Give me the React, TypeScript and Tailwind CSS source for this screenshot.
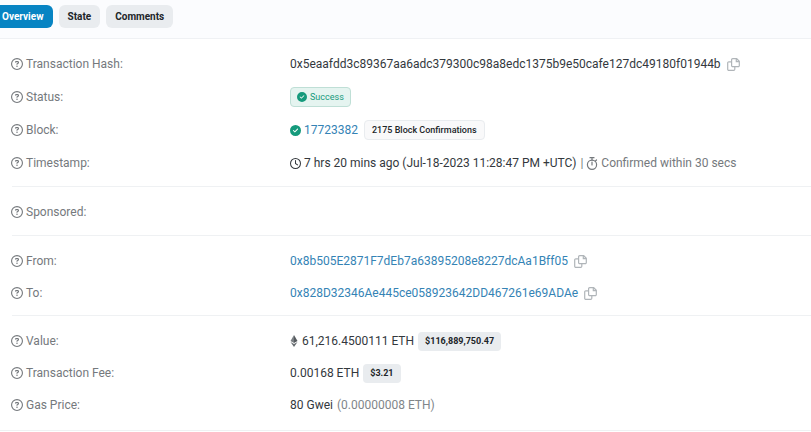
import { FaCircleCheck, FaRegCircleQuestion, FaRegClock } from 'react-icons/fa6';

const tabs = ['Overview', 'State', 'Comments'];

const CopyButton: React.FC<{ label: string }> = ({ label }) => (
  <button type="button" aria-label={label} className="ml-1.5 shrink-0 text-[#b0b5b9]">
    <svg viewBox="0 0 13 13" className="size-[13px]" fill="none" stroke="currentColor" strokeWidth="1.2">
      <path d="M5.7 .7h4l2.6 2.5v4.3a1.1 1.1 0 0 1-1.1 1.1H5.7a1.1 1.1 0 0 1-1.1-1.1V1.8A1.1 1.1 0 0 1 5.7.7z" />
      <path d="M9.3 1v2.6h2.8" />
      <path d="M4.5 3.8H1.8A1.1 1.1 0 0 0 .7 4.9v6.3a1.1 1.1 0 0 0 1.1 1.1h4.9a1.1 1.1 0 0 0 1.1-1.1V8.7" />
    </svg>
  </button>
);

const StopwatchIcon: React.FC = () => (
  <svg viewBox="0 0 12 13" className="h-[13px] w-3" fill="none" stroke="currentColor" strokeWidth="1.2" aria-hidden="true">
    <circle cx="6" cy="7.7" r="4.6" />
    <path d="M4 .7h4M6 .7v2.4M6 5v3M9.3 4.2l1.2-1.2" strokeLinecap="round" />
  </svg>
);

const EtherIcon: React.FC = () => (
  <svg viewBox="0 0 8 12" className="mr-1 h-3 w-2" fill="currentColor" aria-hidden="true">
    <path d="M4 0 .5 6 4 8.1z" fill="#7b8084" />
    <path d="M4 0l3.5 6L4 8.1z" fill="#565b5f" />
    <path d="M.5 6.9 4 9l3.5-2.1L4 12z" fill="#686d71" />
  </svg>
);

const Amount: React.FC<{ children: React.ReactNode }> = ({ children }) => (
  <span className="ml-1 rounded bg-[#e9ecef] px-[7px] text-[9px] leading-[19px] font-bold text-[#212529]">
    {children}
  </span>
);

const Group: React.FC<{ children: React.ReactNode; className?: string }> = ({
  children,
  className = 'pb-[7px]',
}) => <dl className={`ml-3 border-b border-[#eff1f3] pt-[9px] ${className}`}>{children}</dl>;

const Row: React.FC<{ label: string; children?: React.ReactNode }> = ({ label, children }) => (
  <div className="-ml-px grid min-h-8 grid-cols-[279px_1fr] items-center">
    <dt className="flex items-center gap-[3px] text-[#75797d]">
      <FaRegCircleQuestion className="size-3 shrink-0" aria-hidden="true" />
      {label}
    </dt>
    <dd className="flex items-center whitespace-nowrap">{children}</dd>
  </div>
);

export default function App() {
  return (
    <div className="overflow-hidden bg-white font-[Roboto,sans-serif] text-[12px] leading-4 text-[#33383d]">
      <nav
        className="flex gap-1.5 border-b border-[#eff1f4] bg-[#fbfcfe] pt-[5px] pb-[10px]"
        aria-label="Transaction sections"
      >
        {tabs.map((tab, i) => (
          <button
            key={tab}
            type="button"
            className={
              i === 0
                ? '-ml-[7px] rounded-md bg-[#0784c3] px-[9px] py-[3px] text-[10px] leading-[17px] font-bold text-white'
                : 'rounded-md bg-[#e9ecef] px-[9px] py-[3px] text-[10px] leading-[17px] font-bold text-[#212529]'
            }
          >
            {tab}
          </button>
        ))}
      </nav>

      <main>
        <Group className="flex flex-col gap-px pb-[7px]">
          <Row label="Transaction Hash:">
            0x5eaafdd3c89367aa6adc379300c98a8edc1375b9e50cafe127dc49180f01944b
            <CopyButton label="Copy transaction hash" />
          </Row>
          <Row label="Status:">
            <span className="flex items-center gap-[3px] rounded border border-[#bfdfd6] bg-[#e5f4f0] px-1.5 text-[9px] leading-[18px] text-[#159a7c]">
              <FaCircleCheck className="size-[10px]" aria-hidden="true" />
              Success
            </span>
          </Row>
          <Row label="Block:">
            <FaCircleCheck className="mr-[3px] size-[11px] text-[#159a7c]" aria-hidden="true" />
            <a href="#block" className="text-[#3483b5]">
              17723382
            </a>
            <span className="ml-1.5 rounded border border-[#e9ecef] bg-[#f9f9fa] px-[7px] text-[9px] leading-[18px] font-medium text-[#212529]">
              2175 Block Confirmations
            </span>
          </Row>
          <Row label="Timestamp:">
            <FaRegClock className="mr-[3px] size-[11px]" aria-hidden="true" />
            7 hrs 20 mins ago (Jul-18-2023 11:28:47 PM +UTC)
            <span className="ml-1 flex items-center gap-[3px] text-[#75797d]">
              | <StopwatchIcon /> Confirmed within 30 secs
            </span>
          </Row>
        </Group>

        <Group>
          <Row label="Sponsored:" />
        </Group>

        <Group className="pb-1.5">
          <Row label="From:">
            <a href="#from" className="text-[#3483b5]">
              0x8b505E2871F7dEb7a63895208e8227dcAa1Bff05
            </a>
            <CopyButton label="Copy sender address" />
          </Row>
          <Row label="To:">
            <a href="#to" className="text-[#3483b5]">
              0x828D32346Ae445ce058923642DD467261e69ADAe
            </a>
            <CopyButton label="Copy recipient address" />
          </Row>
        </Group>

        <dl className="border-b border-[#eff1f3] pt-[9px] pb-[9px] pl-3">
          <Row label="Value:">
            <EtherIcon />
            61,216.4500111 ETH
            <Amount>$116,889,750.47</Amount>
          </Row>
          <Row label="Transaction Fee:">
            0.00168 ETH
            <Amount>$3.21</Amount>
          </Row>
          <Row label="Gas Price:">
            80 Gwei <span className="ml-1 text-[#81868a]">(0.00000008 ETH)</span>
          </Row>
        </dl>
      </main>
    </div>
  );
}
